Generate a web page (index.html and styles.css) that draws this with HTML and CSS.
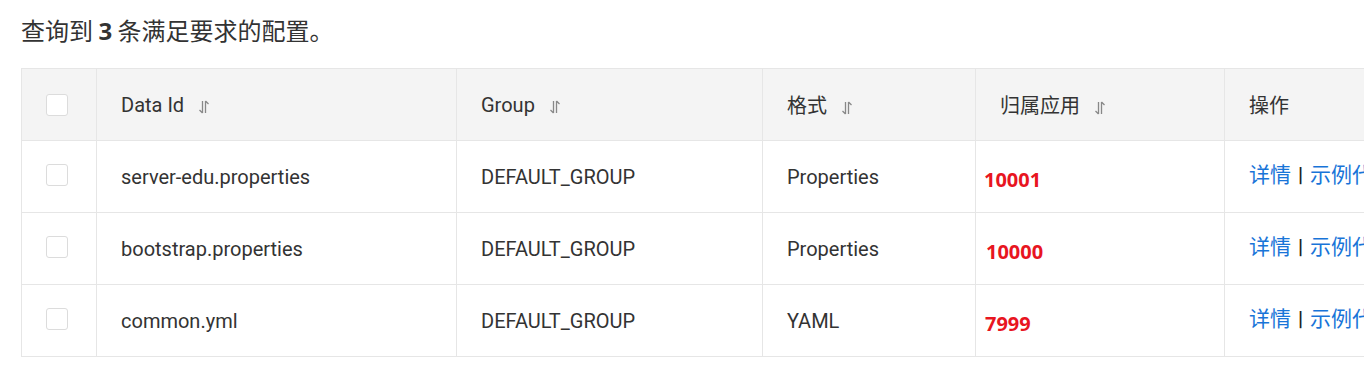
FILE: index.html
```html
<!DOCTYPE html>
<html lang="zh-CN">
<head>
<meta charset="utf-8">
<title>配置列表</title>
<link rel="stylesheet" href="styles.css">
</head>
<body>
<div class="page">
  <div class="summary">查询到 <strong>3</strong> 条满足要求的配置。</div>
  <table class="grid">
    <colgroup>
      <col class="c-check"><col class="c-id"><col class="c-group"><col class="c-fmt"><col class="c-app"><col class="c-op">
    </colgroup>
    <thead>
      <tr>
        <th class="cell-check"><span class="checkbox"></span></th>
        <th>Data Id<span class="sort"><svg width="12" height="14" viewBox="0 0 12 14"><path d="M4.5 1v12M4.5 13L1.5 10" fill="none" stroke="#888" stroke-width="1.3"/><path d="M7.5 13V1M7.5 1l3 3" fill="none" stroke="#888" stroke-width="1.3"/></svg></span></th>
        <th>Group<span class="sort"><svg width="12" height="14" viewBox="0 0 12 14"><path d="M4.5 1v12M4.5 13L1.5 10" fill="none" stroke="#888" stroke-width="1.3"/><path d="M7.5 13V1M7.5 1l3 3" fill="none" stroke="#888" stroke-width="1.3"/></svg></span></th>
        <th>格式<span class="sort"><svg width="12" height="14" viewBox="0 0 12 14"><path d="M4.5 1v12M4.5 13L1.5 10" fill="none" stroke="#888" stroke-width="1.3"/><path d="M7.5 13V1M7.5 1l3 3" fill="none" stroke="#888" stroke-width="1.3"/></svg></span></th>
        <th>归属应用<span class="sort"><svg width="12" height="14" viewBox="0 0 12 14"><path d="M4.5 1v12M4.5 13L1.5 10" fill="none" stroke="#888" stroke-width="1.3"/><path d="M7.5 13V1M7.5 1l3 3" fill="none" stroke="#888" stroke-width="1.3"/></svg></span></th>
        <th>操作</th>
      </tr>
    </thead>
    <tbody>
      <tr>
        <td class="cell-check"><span class="checkbox"></span></td>
        <td>server-edu.properties</td>
        <td>DEFAULT_GROUP</td>
        <td>Properties</td>
        <td class="cell-app"><span class="app">10001</span></td>
        <td class="cell-op"><a class="link">详情</a><span class="sep">|</span><a class="link">示例代码</a></td>
      </tr>
      <tr>
        <td class="cell-check"><span class="checkbox"></span></td>
        <td>bootstrap.properties</td>
        <td>DEFAULT_GROUP</td>
        <td>Properties</td>
        <td class="cell-app"><span class="app app-2">10000</span></td>
        <td class="cell-op"><a class="link">详情</a><span class="sep">|</span><a class="link">示例代码</a></td>
      </tr>
      <tr>
        <td class="cell-check"><span class="checkbox"></span></td>
        <td>common.yml</td>
        <td>DEFAULT_GROUP</td>
        <td>YAML</td>
        <td class="cell-app"><span class="app app-3">7999</span></td>
        <td class="cell-op"><a class="link">详情</a><span class="sep">|</span><a class="link">示例代码</a></td>
      </tr>
    </tbody>
  </table>
</div>
</body>
</html>
```
FILE: styles.css
```css
html, body {
  margin: 0;
  padding: 0;
  background: #fff;
  overflow: hidden;
}
body {
  font-family: Roboto, "Noto Sans CJK SC", "Noto Sans", sans-serif;
  color: #333;
}
.page {
  padding: 16px 0 0 21px;
  width: 1500px;
}
.summary {
  font-size: 24px;
  line-height: 28px;
  height: 28px;
  color: #333;
  font-family: "Noto Sans CJK SC", sans-serif;
  margin-bottom: 24px;
}
.summary strong {
  font-family: "Open Sans", "Noto Sans", sans-serif;
  font-weight: 700;
}
.grid {
  border-collapse: collapse;
  table-layout: fixed;
  width: 1450px;
  font-size: 20px;
}
.c-check { width: 75px; }
.c-id { width: 360px; }
.c-group { width: 306px; }
.c-fmt { width: 213px; }
.c-app { width: 249px; }
.c-op { width: 247px; }
.grid th, .grid td {
  border: 1px solid #e6e6e6;
  height: 71px;
  padding: 0 0 0 24px;
  text-align: left;
  vertical-align: middle;
  white-space: nowrap;
  overflow: hidden;
}
.grid th {
  background: #f4f4f4;
  font-weight: 400;
  font-family: Roboto, "Noto Sans CJK SC", sans-serif;
}
.grid td.cell-app {
  padding-left: 8px;
}
.grid td.cell-op {
  height: 64px;
  padding-bottom: 7px;
}
.checkbox {
  display: block;
  width: 20px;
  height: 20px;
  border: 1px solid #dcdcdc;
  border-radius: 3px;
  background: #fff;
}
.grid tbody .checkbox {
  margin-top: -4px;
}
.sort {
  display: inline-block;
  margin-left: 14px;
  vertical-align: -2px;
}
.sort svg { display: block; }
.app {
  display: inline-block;
  padding-top: 6px;
  color: #e8151f;
  font-weight: 700;
  font-size: 20px;
  font-family: "Open Sans", "Noto Sans", sans-serif;
}
.app-2 { padding-left: 2px; }
.app-3 { padding-left: 1px; }
.link {
  color: #1874d8;
  font-size: 21px;
  font-family: "Noto Sans CJK SC", sans-serif;
  cursor: pointer;
}
.sep {
  color: #222;
  margin: 0 7px;
  font-size: 20px;
  font-weight: 700;
}
```
